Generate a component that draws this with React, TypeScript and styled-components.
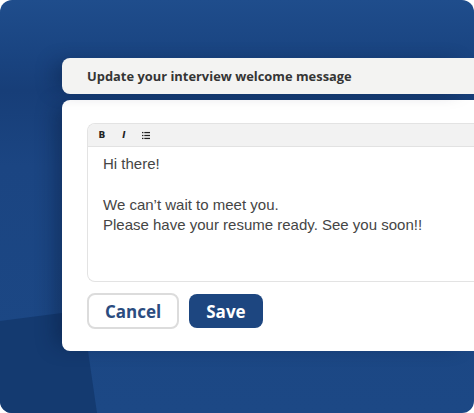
import styled, { createGlobalStyle } from "styled-components"

const GlobalStyle = createGlobalStyle`
  html, body {
    margin: 0;
    padding: 0;
    background: #ffffff;
  }
  #root {
    width: 474px;
    height: 413px;
  }
`

const Frame = styled.div`
  position: relative;
  width: 474px;
  height: 413px;
  box-sizing: border-box;
  border-radius: 12px;
  overflow: hidden;
  padding: 58px 0 0 62px;
  background: linear-gradient(180deg, #1f4d8c 0%, #1a4582 12%, #173e78 22%, #1b4582 40%, #1c4885 100%);

  &::before {
    content: "";
    position: absolute;
    left: 0;
    top: 0;
    right: 0;
    bottom: 0;
    background: #143a70;
    clip-path: polygon(0 321px, 62px 313px, 88px 351px, 97px 413px, 0 413px);
  }
`

const Panel = styled.div`
  position: relative;
  display: flex;
  flex-direction: column;
  gap: 6px;
  font-family: "Open Sans", "Noto Sans", sans-serif;
`

const Header = styled.div`
  position: relative;
  z-index: 1;
  height: 36px;
  display: flex;
  align-items: center;
  padding-left: 25px;
  background: #f3f3f2;
  border-radius: 8px 0 0 8px;
  box-shadow: -12px 0 20px -6px rgba(5, 20, 50, 0.4);
  font-size: 12.9px;
  font-weight: 700;
  color: #353535;
`

const Card = styled.div`
  height: 251px;
  box-sizing: border-box;
  padding: 23px 0 0 25px;
  background: #ffffff;
  border-radius: 8px 0 0 8px;
  box-shadow: -12px 0 20px -6px rgba(5, 20, 50, 0.4);
  display: flex;
  flex-direction: column;
`

const Editor = styled.div`
  height: 159px;
  box-sizing: border-box;
  border: 1px solid #e3e3e3;
  border-right: none;
  border-radius: 8px 0 0 8px;
  overflow: hidden;
  display: flex;
  flex-direction: column;
`

const Toolbar = styled.div`
  height: 22px;
  display: flex;
  align-items: center;
  gap: 14px;
  padding-left: 10px;
  background: #f2f2f2;
  border-bottom: 1px solid #e2e2e2;
  color: #222;
`

const ToolButton = styled.span<{ $italic?: boolean }>`
  font-family: "DejaVu Sans", sans-serif;
  font-size: 9px;
  font-weight: 700;
  font-style: ${(p) => (p.$italic ? "italic" : "normal")};
  line-height: 1;
  width: 8px;
  display: flex;
  justify-content: center;
`

const Body = styled.div`
  padding: 7px 0 0 15px;
  font-family: "Liberation Sans", Arial, sans-serif;
  font-size: 15px;
  line-height: 20px;
  color: #454545;

  p {
    margin: 0 0 21px;
  }
`

const Actions = styled.div`
  display: flex;
  align-items: center;
  gap: 10px;
  margin-top: 11px;
`

const Button = styled.button<{ $primary?: boolean }>`
  height: ${(p) => (p.$primary ? "34px" : "36px")};
  padding: 0 ${(p) => (p.$primary ? "17px" : "16px")};
  box-sizing: border-box;
  border-radius: 8px;
  border: ${(p) => (p.$primary ? "none" : "2px solid #dcdcdc")};
  background: ${(p) => (p.$primary ? "#1d4680" : "#ffffff")};
  color: ${(p) => (p.$primary ? "#ffffff" : "#2b4c7f")};
  font-family: "Open Sans", "Noto Sans", sans-serif;
  font-size: 17px;
  font-weight: 700;
  cursor: pointer;
`

const ListIcon = () => (
  <svg width="9" height="9" viewBox="0 0 9 9">
    <rect x="0" y="0.5" width="1.6" height="1.4" fill="#222" />
    <rect x="0" y="3.8" width="1.6" height="1.4" fill="#222" />
    <rect x="0" y="7.1" width="1.6" height="1.4" fill="#222" />
    <rect x="2.6" y="0.5" width="6.4" height="1.4" fill="#222" />
    <rect x="2.6" y="3.8" width="6.4" height="1.4" fill="#222" />
    <rect x="2.6" y="7.1" width="6.4" height="1.4" fill="#222" />
  </svg>
)

export default function App() {
  return (
    <>
      <GlobalStyle />
      <Frame>
        <Panel>
          <Header>Update your interview welcome message</Header>
          <Card>
            <Editor>
              <Toolbar>
                <ToolButton>B</ToolButton>
                <ToolButton $italic>I</ToolButton>
                <ToolButton>
                  <ListIcon />
                </ToolButton>
              </Toolbar>
              <Body>
                <p>Hi there!</p>
                We can’t wait to meet you.
                <br />
                Please have your resume ready. See you soon!!
              </Body>
            </Editor>
            <Actions>
              <Button>Cancel</Button>
              <Button $primary>Save</Button>
            </Actions>
          </Card>
        </Panel>
      </Frame>
    </>
  )
}
